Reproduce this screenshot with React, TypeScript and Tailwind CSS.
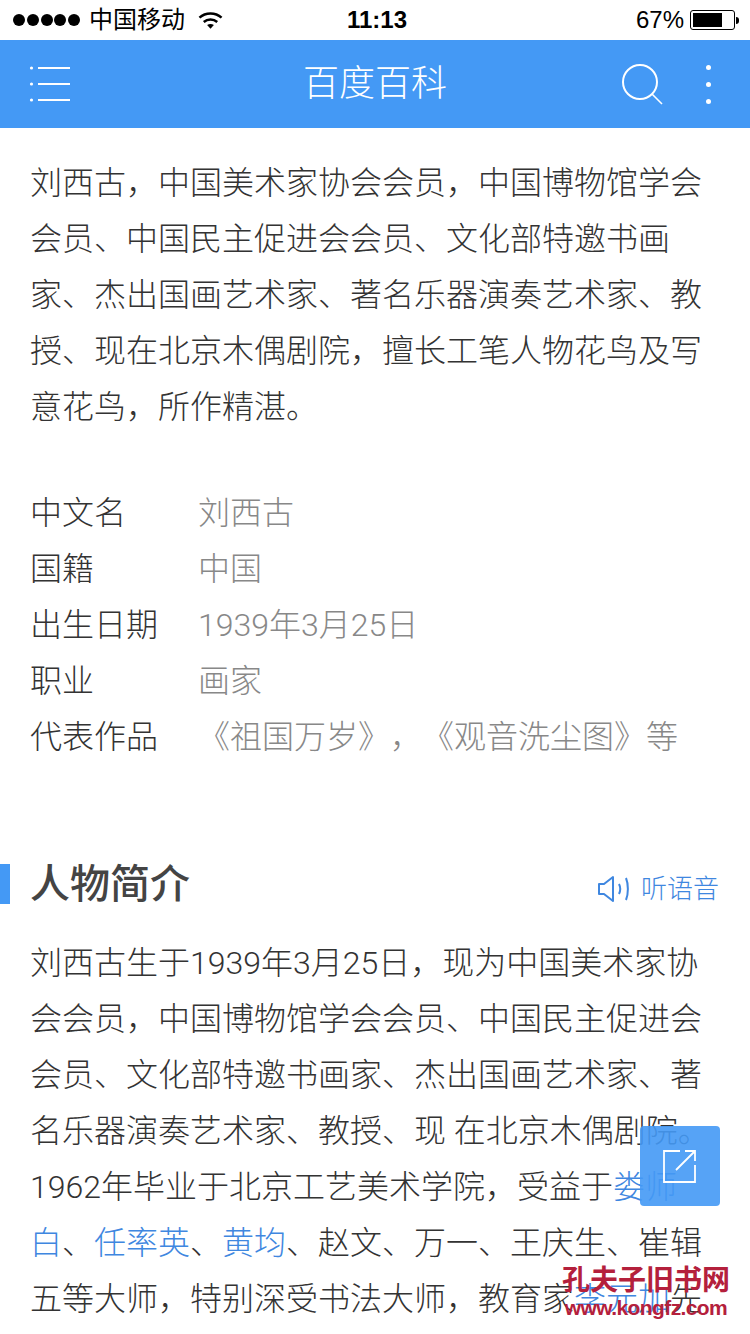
import React from "react";

const FONT = "font-['Liberation_Sans','Noto_Sans_CJK_SC',sans-serif]";
const BODY = "font-['Roboto','Noto_Sans_CJK_SC',sans-serif]";

const intro = [
  "刘西古，中国美术家协会会员，中国博物馆学会",
  "会员、中国民主促进会会员、文化部特邀书画",
  "家、杰出国画艺术家、著名乐器演奏艺术家、教",
  "授、现在北京木偶剧院，擅长工笔人物花鸟及写",
  "意花鸟，所作精湛。",
];

const facts = [
  ["中文名", "刘西古"],
  ["国籍", "中国"],
  ["出生日期", "1939年3月25日"],
  ["职业", "画家"],
  ["代表作品", "《祖国万岁》，《观音洗尘图》等"],
];

const Link: React.FC<{ children: React.ReactNode }> = ({ children }) => (
  <span className="text-[#3f87e0]">{children}</span>
);

const StatusBar: React.FC = () => (
  <div className="relative flex h-10 items-center bg-white pl-[13px] pr-[11px] text-[24px] text-black">
    <div className="flex gap-[1.75px]">
      {[0, 1, 2, 3, 4].map((i) => (
        <span key={i} className="h-[12px] w-[12px] rounded-full bg-black" />
      ))}
    </div>
    <span className="ml-[9px] leading-10">中国移动</span>
    <svg width="25" height="18" viewBox="0 0 26 18" className="ml-[13px]">
      <path d="M1.5 6.5C8 .8 18 .8 24.5 6.5" fill="none" stroke="#000" strokeWidth="2.6" />
      <path d="M6 11c4-3.400 10-3.400 14 0" fill="none" stroke="#000" strokeWidth="2.6" />
      <path d="M9.500 14.200c2-1.500 5-1.500 7 0L13 18z" fill="#000" />
    </svg>
    <span className="absolute left-[4px] right-0 text-center font-semibold leading-10">11:13</span>
    <span className="ml-auto leading-10">67%</span>
    <div className="ml-[6px] flex items-center">
      <div className="h-[20px] w-[45px] rounded-[3px] border border-black p-[2px]">
        <div className="h-full w-[29px] bg-black" />
      </div>
      <div className="ml-[1px] h-[7px] w-[3px] rounded-r-sm bg-black" />
    </div>
  </div>
);

const NavBar: React.FC = () => (
  <div className="relative flex h-[88px] items-center bg-[#4499f5] text-white">
    <svg width="44" height="40" viewBox="0 0 44 40" className="ml-[28px]">
      {[5, 21, 37].map((y) => (
        <g key={y}>
          <circle cx="3.500" cy={y - 1} r="1.600" fill="#fff" />
          <rect x="10" y={y - 2} width="32" height="2" fill="#fff" />
        </g>
      ))}
    </svg>
    <span className="absolute left-0 right-0 text-center text-[36px] font-light leading-[88px]">
      百度百科
    </span>
    <svg width="44" height="44" viewBox="0 0 44 44" className="ml-auto mr-[41px] mt-[2px]">
      <circle cx="19" cy="19" r="17" fill="none" stroke="#fff" strokeWidth="2" />
      <path d="M31 31l10 10" stroke="#fff" strokeWidth="1.600" fill="none" />
    </svg>
    <div className="mr-[39px] flex flex-col gap-[12px]">
      {[0, 1, 2].map((i) => (
        <span key={i} className="h-[5px] w-[5px] rounded-full bg-white" />
      ))}
    </div>
  </div>
);

const App: React.FC = () => {
  return (
    <div
      lang="zh-CN"
      className={`relative h-[1334px] w-[750px] overflow-hidden bg-white [text-spacing-trim:space-all] ${FONT}`}
    >
      <StatusBar />
      <NavBar />

      <div className={`whitespace-nowrap px-[30px] pt-[27px] text-[32px] font-light leading-[56px] text-[#333] ${BODY}`}>
        {intro.map((line) => (
          <div key={line}>{line}</div>
        ))}
      </div>

      <div className={`whitespace-nowrap px-[30px] pt-[50px] text-[32px] font-light leading-[56px] ${BODY}`}>
        {facts.map(([label, value]) => (
          <div key={label} className="flex">
            <span className="w-[168px] text-[#333]">{label}</span>
            <span className="text-[#888]">{value}</span>
          </div>
        ))}
      </div>

      <div className="mt-[99px] flex h-10 items-center">
        <div className="h-10 w-[10px] bg-[#4499f5]" />
        <h2 className="ml-[20px] text-[40px] font-medium leading-10 text-[#444]">人物简介</h2>
        <div className="ml-auto mr-[31px] mt-[10px] flex items-center text-[26px] font-light text-[#3f87e0]">
          <svg width="34" height="28" viewBox="0 0 34 28" fill="none" stroke="#3f87e0" strokeWidth="2">
            <path d="M2 9h5l9-7v24l-9-7H2z" strokeLinejoin="round" />
            <path d="M22 9c1.500 3 1.500 7 0 10" />
            <path d="M29 3c2.500 6 2.500 16 0 22" />
          </svg>
          <span className="ml-[10px]">听语音</span>
        </div>
      </div>

      <div className={`whitespace-nowrap px-[30px] pt-[31px] text-[32px] font-light leading-[56px] text-[#333] ${BODY}`}>
        <div>刘西古生于1939年3月25日，现为中国美术家协</div>
        <div>会会员，中国博物馆学会会员、中国民主促进会</div>
        <div>会员、文化部特邀书画家、杰出国画艺术家、著</div>
        <div>名乐器演奏艺术家、教授、现 在北京木偶剧院。</div>
        <div>
          1962年毕业于北京工艺美术学院，受益于<Link>娄师</Link>
        </div>
        <div>
          <Link>白</Link>、<Link>任率英</Link>、<Link>黄均</Link>、赵文、万一、王庆生、崔辑
        </div>
        <div>
          五等大师，特别深受书法大师，教育家<Link>李元</Link>
          <Link>加</Link>先
        </div>
      </div>

      {/* floating share button */}
      <div className="absolute left-[640px] top-[1126px] flex h-20 w-20 items-center justify-center rounded-[4px] bg-[#4499f5]/90">
        <svg width="34" height="34" viewBox="0 0 34 34" fill="none" stroke="#fff" strokeWidth="1.800">
          <path d="M17 2H1v31h31V16" />
          <path d="M13 21L32 2M22 2h10v10" />
        </svg>
      </div>

      {/* watermark */}
      <div className="absolute left-[560px] top-[1265px] w-[172px] text-center font-bold text-[#b4203c]">
        <div className="whitespace-nowrap text-[28px] leading-[32px]">孔夫子旧书网</div>
        <div className="whitespace-nowrap text-[21px] leading-[22px] tracking-[-0.6px]">www.kongfz.com</div>
      </div>
    </div>
  );
};

export default App;
